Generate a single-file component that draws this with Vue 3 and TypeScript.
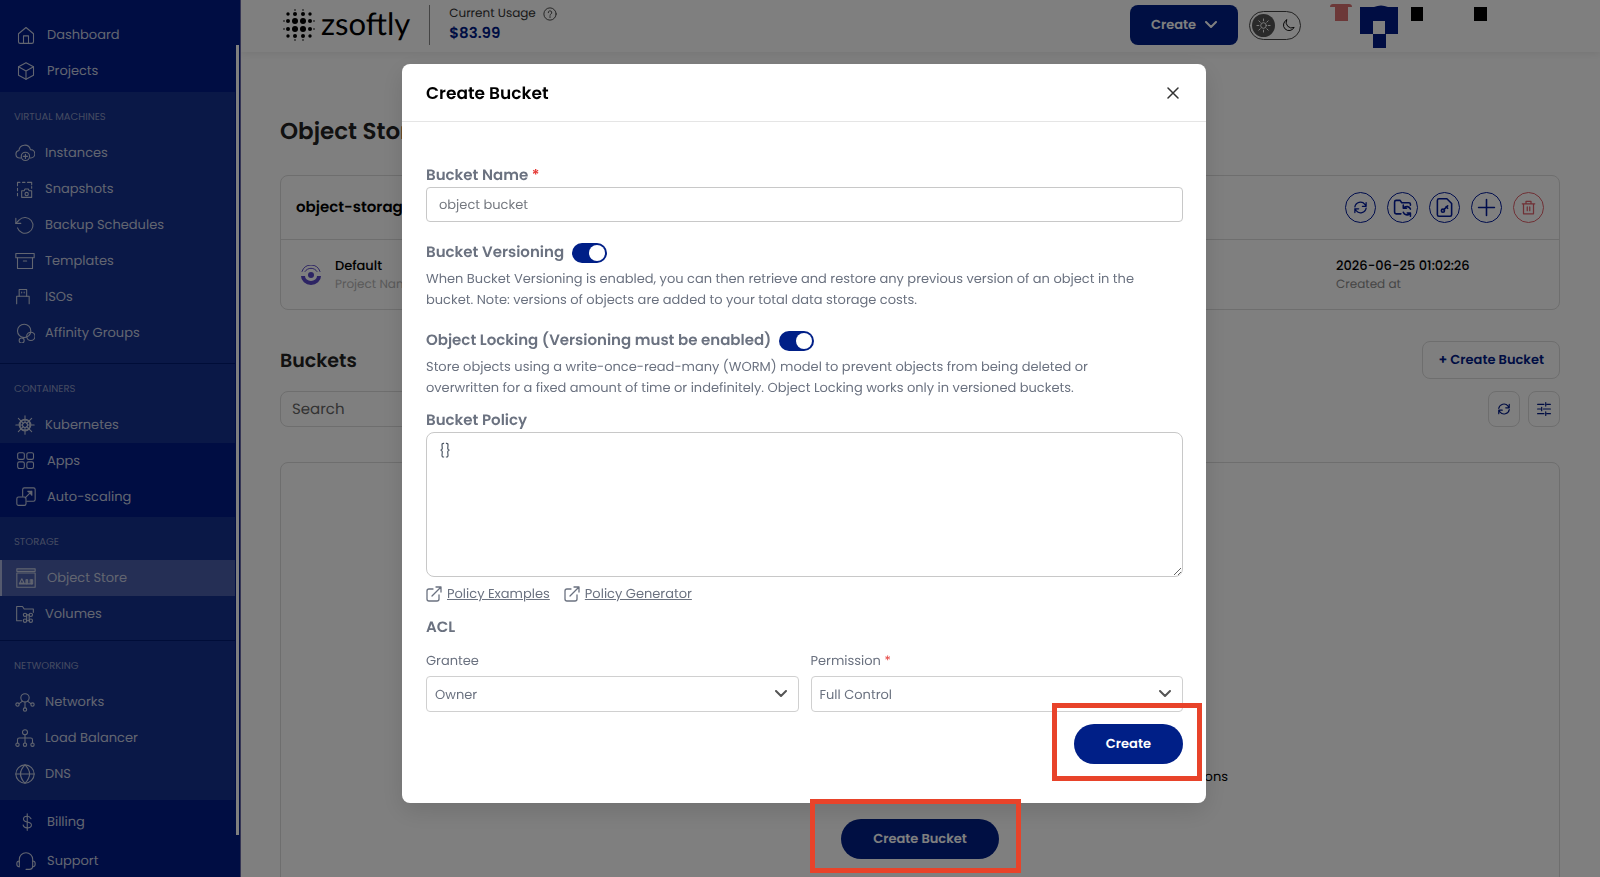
<script setup lang="ts">
import { ref } from 'vue'

interface NavItem {
  label: string
  icon: string
  active?: boolean
}
interface NavBlock {
  kind: 'plain' | 'section' | 'footer'
  title?: string
  divided?: boolean
  roomy?: boolean
  flush?: boolean
  items: NavItem[]
}

const icons: Record<string, string[]> = {
  home: ['M3 10.5 12 3l9 7.5V20a2 2 0 0 1-2 2H5a2 2 0 0 1-2-2z', 'M9 22v-9h6v9'],
  cube: ['M12 2 21 7v10l-9 5-9-5V7z', 'M3 7l9 5 9-5M12 12v10'],
  cloud: [
    'M7 18H5.500a4.500 4.500 0 0 1-.8-8.900A7 7 0 0 1 18.500 8a5 5 0 0 1 .5 10h-1',
    'M17.500 16a5 5 0 1 1-10 0 5 5 0 0 1 10 0z',
    'M12.500 13.500v5M10 16h5',
  ],
  snapshot: [
    'M3 20v-3M3 14v-3M3 8V4h3M9 4h3M15 4h5v3M20 9v2',
    'M8 14h3l1-2h4l1 2h3v8H8z',
    'M16 18a2 2 0 1 1-4 0 2 2 0 0 1 4 0z',
  ],
  restore: ['M1 4v6h6', 'M3 15.500A9.500 9.500 0 1 0 5 6L1 10'],
  archive: ['M1 3h22v5H1z', 'M3 8v13h18V8', 'M10 12h4'],
  usb: ['M5 3h9v8H5z', 'M5 11H2v9M14 11h3v9', 'M8 6v1M11 6v1'],
  bubbles: [
    'M19 9.500a8 8 0 1 1-16 0 8 8 0 0 1 16 0z',
    'M24 16a5 5 0 1 1-10 0 5 5 0 0 1 10 0z',
    'M11 21a3 3 0 1 1-6 0 3 3 0 0 1 6 0z',
  ],
  helm: [
    'M19 12a7 7 0 1 1-14 0 7 7 0 0 1 14 0z',
    'M15 12a3 3 0 1 1-6 0 3 3 0 0 1 6 0z',
    'M12 1v8M12 15v8M1 12h8M15 12h8M4 4l6 6M14 14l6 6M20 4l-6 6M10 14l-6 6',
    'M18 12a6 6 0 1 1-12 0 6 6 0 0 1 12 0z',
  ],
  apps: [
    'M4 2h4a2 2 0 0 1 2 2v4a2 2 0 0 1-2 2H4a2 2 0 0 1-2-2V4a2 2 0 0 1 2-2z',
    'M15 2h4a2 2 0 0 1 2 2v4a2 2 0 0 1-2 2h-4a2 2 0 0 1-2-2V4a2 2 0 0 1 2-2z',
    'M4 13h4a2 2 0 0 1 2 2v4a2 2 0 0 1-2 2H4a2 2 0 0 1-2-2v-4a2 2 0 0 1 2-2z',
    'M15 13h4a2 2 0 0 1 2 2v4a2 2 0 0 1-2 2h-4a2 2 0 0 1-2-2v-4a2 2 0 0 1 2-2z',
  ],
  scale: [
    'M8 11V3a2 2 0 0 1 2-2h11a2 2 0 0 1 2 2v12a2 2 0 0 1-2 2h-8',
    'M3 12h7a2 2 0 0 1 2 2v6a2 2 0 0 1-2 2H3a2 2 0 0 1-2-2v-6a2 2 0 0 1 2-2z',
    'M11 13l8-8M14 5h5v5M15 6h3v3',
  ],
  store: [
    'M1 1h22v3H1z',
    'M1 6h22v17H1z',
    'M4 19l3-6 3 6zM5 18h4M12 14h2v5h-2zM17 14h3v5h-3zM4 19h16',
    'M13 14v5M18.500 14v5',
  ],
  volumes: [
    'M8 20H2V3h7l2 3h11v4',
    'M14 13a2 2 0 1 1-4 0 2 2 0 0 1 4 0zM21 13a2 2 0 1 1-4 0 2 2 0 0 1 4 0z',
    'M14 20a2 2 0 1 1-4 0 2 2 0 0 1 4 0zM21 20a2 2 0 1 1-4 0 2 2 0 0 1 4 0z',
    'M14 13h3v7h-3z',
  ],
  network: [
    'M17 7a5 5 0 1 1-10 0 5 5 0 0 1 10 0z',
    'M5 15a2 2 0 1 1-4 0 2 2 0 0 1 4 0zM23 15a2 2 0 1 1-4 0 2 2 0 0 1 4 0zM14 21a2 2 0 1 1-4 0 2 2 0 0 1 4 0z',
    'M5 14l4-3M19 14l-4-3M12 12v7',
  ],
  tree: [
    'M15 5a3 3 0 1 1-6 0 3 3 0 0 1 6 0z',
    'M5 20a2 2 0 1 1-4 0 2 2 0 0 1 4 0zM23 20a2 2 0 1 1-4 0 2 2 0 0 1 4 0zM14 20a2 2 0 1 1-4 0 2 2 0 0 1 4 0z',
    'M12 8v10M3 18v-4a2 2 0 0 1 2-2h14a2 2 0 0 1 2 2v4',
  ],
  globe: [
    'M23 12a11 11 0 1 1-22 0 11 11 0 0 1 22 0z',
    'M12 1c-7 7-7 15 0 22M12 1c7 7 7 15 0 22M1 12h22',
  ],
  dollar: ['M18 8c-1-2-2-3-4.500-3C11 5 9 6 9 8.500s2 3 4.500 3.500 5 1 5 3.500-2.500 3.500-5 3.500-4.500-1-5-3.500', 'M13.500 2v20'],
  headset: [
    'M4 14V10a8 8 0 0 1 16 0v8a4 4 0 0 1-4 4h-4',
    'M4 12a3 3 0 0 0-3 3v1a3 3 0 0 0 3 3zM20 12a3 3 0 0 1 3 3v1a3 3 0 0 1-3 3',
  ],
}

const nav: NavBlock[] = [
  { kind: 'plain', items: [{ label: 'Dashboard', icon: 'home' }, { label: 'Projects', icon: 'cube' }] },
  {
    kind: 'section',
    title: 'Virtual Machines',
    divided: true,
    roomy: true,
    items: [
      { label: 'Instances', icon: 'cloud' },
      { label: 'Snapshots', icon: 'snapshot' },
      { label: 'Backup Schedules', icon: 'restore' },
      { label: 'Templates', icon: 'archive' },
      { label: 'ISOs', icon: 'usb' },
      { label: 'Affinity Groups', icon: 'bubbles' },
    ],
  },
  { kind: 'section', title: 'Containers', flush: true, items: [{ label: 'Kubernetes', icon: 'helm' }] },
  { kind: 'plain', items: [{ label: 'Apps', icon: 'apps' }, { label: 'Auto-scaling', icon: 'scale' }] },
  {
    kind: 'section',
    title: 'Storage',
    divided: true,
    items: [
      { label: 'Object Store', icon: 'store', active: true },
      { label: 'Volumes', icon: 'volumes' },
    ],
  },
  {
    kind: 'section',
    title: 'Networking',
    items: [
      { label: 'Networks', icon: 'network' },
      { label: 'Load Balancer', icon: 'tree' },
      { label: 'DNS', icon: 'globe' },
    ],
  },
  { kind: 'footer', items: [{ label: 'Billing', icon: 'dollar' }, { label: 'Support', icon: 'headset' }] },
]

const bucketName = ref('')
const versioning = ref(true)
const locking = ref(true)
const policy = ref('{}')
const grantee = ref('Owner')
const permission = ref('Full Control')
const search = ref('')
</script>

<template>
  <div class="app">
    <aside class="sidebar">
      <nav class="nav" aria-label="Main">
        <div
          v-for="(block, i) in nav"
          :key="i"
          :class="['block', block.kind, { divided: block.divided, roomy: block.roomy, flush: block.flush }]"
        >
          <h2 v-if="block.title" class="block-title">{{ block.title }}</h2>
          <a
            v-for="item in block.items"
            :key="item.label"
            href="#"
            :class="['nav-item', { active: item.active }]"
          >
            <svg class="nav-icon" viewBox="0 0 24 24" aria-hidden="true">
              <path v-for="(d, k) in icons[item.icon]" :key="k" :d="d" />
            </svg>
            <span>{{ item.label }}</span>
          </a>
        </div>
      </nav>
      <div class="scroll-thumb"></div>
    </aside>

    <div class="page">
      <header class="topbar">
        <div class="brand">
          <svg class="brand-mark" viewBox="0 0 34 34" aria-hidden="true">
            <g>
              <circle cx="13" cy="13" r="3" /><circle cx="21" cy="13" r="3" />
              <circle cx="13" cy="21" r="3" /><circle cx="21" cy="21" r="3" />
              <circle cx="6" cy="13" r="2" /><circle cx="28" cy="13" r="2" />
              <circle cx="6" cy="21" r="2" /><circle cx="28" cy="21" r="2" />
              <circle cx="13" cy="6" r="2" /><circle cx="21" cy="6" r="2" />
              <circle cx="13" cy="28" r="2" /><circle cx="21" cy="28" r="2" />
              <circle cx="6" cy="6" r="1.700" /><circle cx="28" cy="6" r="1.700" />
              <circle cx="6" cy="28" r="1.700" /><circle cx="28" cy="28" r="1.700" />
              <circle cx="2" cy="13" r=".8" /><circle cx="2" cy="21" r=".8" />
              <circle cx="32" cy="13" r=".8" /><circle cx="32" cy="21" r=".8" />
              <circle cx="13" cy="2" r=".8" /><circle cx="21" cy="2" r=".8" />
              <circle cx="13" cy="32" r=".8" /><circle cx="21" cy="32" r=".8" />
            </g>
          </svg>
          <span class="brand-name">zsoftly</span>
        </div>
        <div class="usage">
          <span class="usage-label">
            Current Usage
            <svg class="help" viewBox="0 0 16 16" aria-hidden="true">
              <circle cx="8" cy="8" r="7" />
              <path d="M6 6.500a2 2 0 1 1 3 1.600c-.7.400-1 .8-1 1.400M8 11v1" />
            </svg>
          </span>
          <strong class="usage-value">$83.99</strong>
        </div>
        <div class="top-actions">
          <button type="button" class="create-menu">
            Create
            <svg viewBox="0 0 12 8" aria-hidden="true"><path d="M1 1l5 5 5-5" /></svg>
          </button>
          <button type="button" class="theme" aria-label="Theme">
            <span class="theme-on">
              <svg viewBox="0 0 16 16" aria-hidden="true">
                <circle cx="8" cy="8" r="3" />
                <path d="M8 1v2M8 13v2M1 8h2M13 8h2M3 3l1.500 1.500M11.500 11.500L13 13M13 3l-1.500 1.500M4.500 11.500L3 13" />
              </svg>
            </span>
            <svg class="moon" viewBox="0 0 16 16" aria-hidden="true">
              <path d="M6 2a6 6 0 1 0 8 8A6 6 0 0 1 6 2z" />
            </svg>
          </button>
          <svg class="account" viewBox="0 0 160 48" aria-hidden="true">
            <path fill="#d87070" d="M0 3a3 3 0 0 1 3-3h16a3 3 0 0 1 3 3h-4v14H5V3z" />
            <path
              fill="#001a87"
              d="M30 3h14q7-3 14 0h10v27H56v14H43V30H30z"
            />
            <path fill="#fff" d="M43 17h12v13H43z" />
            <path fill="#000" d="M81 3h12v14H81zM144 3h13v14h-13z" />
          </svg>
        </div>
      </header>

      <main class="content">
        <h1 class="page-title">Object Storage</h1>

        <section class="card">
          <div class="card-head">
            <h2 class="card-title">object-storage</h2>
            <div class="card-actions">
              <button type="button" class="round" aria-label="Refresh">
                <svg viewBox="0 0 24 24"><path d="M3 11a9 9 0 0 1 16-4l2 3M21 4v6h-6M21 13a9 9 0 0 1-16 4l-2-3M3 20v-6h6" /></svg>
              </button>
              <button type="button" class="round" aria-label="Sync folder">
                <svg class="big" viewBox="0 0 24 24"><path d="M10 20H4a2 2 0 0 1-2-2V5a2 2 0 0 1 2-2h5l2 3h9a2 2 0 0 1 2 2v1M22 14a5 5 0 0 0-8-2M13 9v4h4M13 18a5 5 0 0 0 8 2M22 23v-4h-4" /></svg>
              </button>
              <button type="button" class="round" aria-label="Access keys">
                <svg class="big" viewBox="0 0 24 24"><path d="M5 1h10l6 6v14a2 2 0 0 1-2 2H5a2 2 0 0 1-2-2V3a2 2 0 0 1 2-2zM12 16a2 2 0 1 1-4 0 2 2 0 0 1 4 0zM11 15l5-5M14 11l2 2" /></svg>
              </button>
              <button type="button" class="round" aria-label="Add">
                <svg class="big" viewBox="0 0 24 24"><path d="M12 2v20M2 12h20" /></svg>
              </button>
              <button type="button" class="round danger" aria-label="Delete">
                <svg viewBox="0 0 24 24"><path d="M2 6h20M8 6V2h8v4M4 6v16h16V6M10 11v6M14 11v6" /></svg>
              </button>
            </div>
          </div>
          <div class="card-body">
            <svg class="project-logo" viewBox="0 0 20 20" aria-hidden="true">
              <circle cx="10" cy="10" r="3" />
              <path d="M0 11a10 9 0 0 0 20 0h-4a6 5 0 0 1-12 0z" />
              <path class="line" d="M1 6.500a9.500 9.500 0 0 1 18 0M4 6.500a7 7 0 0 1 12 0" />
            </svg>
            <div class="fact">
              <span class="fact-value">Default</span>
              <span class="fact-label">Project Name</span>
            </div>
            <div class="fact created">
              <span class="fact-value">2026-06-25 01:02:26</span>
              <span class="fact-label dark">Created at</span>
            </div>
          </div>
        </section>

        <div class="row buckets-head">
          <h2 class="section-title">Buckets</h2>
          <button type="button" class="outline">+ Create Bucket</button>
        </div>

        <div class="row">
          <input v-model="search" class="search" type="search" placeholder="Search" aria-label="Search" />
          <div class="tools">
            <button type="button" class="tool" aria-label="Refresh buckets">
              <svg viewBox="0 0 24 24"><path d="M3 11a9 9 0 0 1 16-4l2 3M21 4v6h-6M21 13a9 9 0 0 1-16 4l-2-3M3 20v-6h6" /></svg>
            </button>
            <button type="button" class="tool" aria-label="Filters">
              <svg viewBox="0 0 24 24"><path d="M1 4h11M17 4h6M15 1v6M1 12h5M11 12h12M8 9v6M1 20h11M17 20h6M15 17v6" /></svg>
            </button>
          </div>
        </div>

        <section class="empty">
          <p class="empty-text">Create a bucket to keep your files with versions, policies and permissions</p>
          <div class="marked marked-page">
            <button type="button" class="pill">Create Bucket</button>
          </div>
        </section>
      </main>
    </div>

    <div class="overlay">
      <form class="modal" role="dialog" aria-labelledby="modal-title" @submit.prevent>
        <div class="modal-head">
          <h2 id="modal-title" class="modal-title">Create Bucket</h2>
          <button type="button" class="close" aria-label="Close">
            <svg viewBox="0 0 12 12"><path d="M1 1l10 10M11 1L1 11" /></svg>
          </button>
        </div>
        <div class="modal-body">
          <label class="label" for="bucket-name">Bucket Name <span class="req">*</span></label>
          <input id="bucket-name" v-model="bucketName" class="field" type="text" placeholder="object bucket" />

          <div class="switch-row">
            <label class="label" for="versioning">Bucket Versioning</label>
            <input id="versioning" v-model="versioning" class="switch" type="checkbox" />
          </div>
          <p class="hint">
            When Bucket Versioning is enabled, you can then retrieve and restore any previous version of an object in the<br />
            bucket. Note: versions of objects are added to your total data storage costs.
          </p>

          <div class="switch-row">
            <label class="label" for="locking">Object Locking (Versioning must be enabled)</label>
            <input id="locking" v-model="locking" class="switch" type="checkbox" />
          </div>
          <p class="hint">
            Store objects using a write-once-read-many (WORM) model to prevent objects from being deleted or<br />
            overwritten for a fixed amount of time or indefinitely. Object Locking works only in versioned buckets.
          </p>

          <label class="label policy-label" for="policy">Bucket Policy</label>
          <textarea id="policy" v-model="policy" class="field area"></textarea>

          <div class="links">
            <a v-for="name in ['Policy Examples', 'Policy Generator']" :key="name" href="#" class="link">
              <svg viewBox="0 0 16 16" aria-hidden="true">
                <path d="M7 3H3a2 2 0 0 0-2 2v8a2 2 0 0 0 2 2h8a2 2 0 0 0 2-2V9M10 1h5v5M15 1L6 10" />
              </svg>
              <span>{{ name }}</span>
            </a>
          </div>

          <h3 class="label acl">ACL</h3>
          <div class="grid">
            <div class="cell">
              <label class="small-label" for="grantee">Grantee</label>
              <div class="select-wrap">
                <select id="grantee" v-model="grantee" class="select">
                  <option>Owner</option>
                </select>
                <svg class="chevron" viewBox="0 0 12 8" aria-hidden="true"><path d="M1 1l5 5 5-5" /></svg>
              </div>
            </div>
            <div class="cell">
              <label class="small-label" for="permission">Permission <span class="req">*</span></label>
              <div class="select-wrap">
                <select id="permission" v-model="permission" class="select">
                  <option>Full Control</option>
                </select>
                <svg class="chevron" viewBox="0 0 12 8" aria-hidden="true"><path d="M1 1l5 5 5-5" /></svg>
              </div>
            </div>
          </div>

          <div class="modal-actions">
            <div class="marked marked-modal">
              <button type="submit" class="pill">Create</button>
            </div>
          </div>
        </div>
      </form>
    </div>
  </div>
</template>

<style>
html,
body {
  margin: 0;
  height: 100%;
  background: #fff;
}
</style>

<style scoped>
.app {
  --navy: #001f87;
  --grey: #6b7280;
  display: flex;
  height: 100vh;
  overflow: hidden;
  background: #fff;
  font-family: Poppins, Inter, "Open Sans", sans-serif;
  font-size: 13px;
  text-rendering: geometricPrecision;
  color: #000;
}
.app *,
.app *::before {
  box-sizing: border-box;
}
h1,
h2,
h3,
p {
  margin: 0;
}
button,
input,
select,
textarea {
  font: inherit;
  color: inherit;
  text-rendering: inherit;
}
button {
  padding: 0;
  cursor: pointer;
}
svg {
  flex: none;
  fill: none;
  stroke: currentColor;
  stroke-linecap: round;
  stroke-linejoin: round;
}

/* Sidebar */
.sidebar {
  position: relative;
  flex: none;
  width: 241px;
  height: 100vh;
  overflow: hidden;
  background: #001a87;
  border-right: 1px solid #6a6aa8;
}
.nav {
  padding: 17px 5px 0 0;
}
.block-title {
  margin-bottom: 10px;
  padding-left: 14px;
  font-size: 10px;
  line-height: 16px;
  font-weight: 400;
  text-transform: uppercase;
  color: #8a96c2;
}
.plain {
  padding-bottom: 2px;
}
.plain:first-child {
  padding-bottom: 3px;
}
.section {
  padding: 17px 0 8px;
  background: #14308e;
}
.section.roomy {
  padding-bottom: 12px;
}
.section.flush {
  padding-bottom: 0;
}
.section.divided {
  border-bottom: 1px solid #001a70;
}
.footer {
  padding-top: 2px;
}
.nav-item {
  display: flex;
  align-items: center;
  gap: 10px;
  height: 36px;
  padding-left: 15px;
  color: #c4cbe0;
  text-decoration: none;
}
.footer .nav-item {
  height: 39px;
}
.plain .nav-item,
.footer .nav-item,
.nav-item.active {
  padding-left: 16px;
  gap: 11px;
}
.nav-item.active {
  padding-left: 14px;
  border-left: 2px solid #aab4dc;
  background: #4a5eaa;
}
.nav-icon {
  width: 20px;
  height: 20px;
  stroke-width: 1.3;
}
.scroll-thumb {
  position: absolute;
  top: 45px;
  bottom: 42px;
  right: 1px;
  width: 3px;
  background: #fff;
}

/* Top bar */
.page {
  flex: 1;
  min-width: 0;
}
.topbar {
  display: flex;
  align-items: center;
  height: 52px;
  padding: 0 110px 2px 41px;
  background: #fff;
  box-shadow: 0 2px 8px rgba(0, 0, 0, 0.08);
}
.brand {
  display: flex;
  align-items: center;
  gap: 5px;
  padding-right: 19px;
  border-right: 1px solid #888;
  height: 40px;
}
.brand-mark {
  width: 34px;
  height: 34px;
}
.brand-mark g {
  fill: #000;
  stroke: none;
}
.brand-name {
  font-family: Lato, sans-serif;
  font-size: 31px;
  line-height: 36px;
  margin-top: -4px;
}
.usage {
  display: flex;
  flex-direction: column;
  padding-left: 19px;
}
.usage-label {
  display: flex;
  align-items: center;
  gap: 7px;
  font-size: 12px;
  line-height: 18px;
  color: #333;
}
.help {
  width: 14px;
  height: 14px;
}
.usage-value {
  font-size: 15px;
  line-height: 22px;
  font-weight: 600;
  color: #001a87;
}
.top-actions {
  display: flex;
  align-items: center;
  gap: 11px;
  margin-left: auto;
}
.create-menu {
  display: flex;
  align-items: center;
  justify-content: center;
  gap: 9px;
  width: 108px;
  height: 40px;
  border: 0;
  border-radius: 8px;
  background: var(--navy);
  color: #fff;
  font-weight: 600;
}
.create-menu svg {
  width: 12px;
  height: 8px;
  stroke-width: 2;
}
.theme {
  display: flex;
  align-items: center;
  gap: 6px;
  width: 52px;
  height: 29px;
  padding: 0 2px;
  border: 1px solid #444;
  border-radius: 15px;
  background: none;
}
.theme-on {
  display: flex;
  align-items: center;
  justify-content: center;
  width: 23px;
  height: 23px;
  border-radius: 50%;
  background: #555;
  color: #fff;
}
.theme svg {
  width: 15px;
  height: 15px;
}
.account {
  width: 160px;
  height: 48px;
  margin: 6px 0 0 18px;
  stroke: none;
}

/* Content */
.content {
  padding: 60px 40px 0 39px;
}
.page-title {
  font-size: 23px;
  line-height: 40px;
  font-weight: 600;
  color: #222;
}
.card {
  margin-top: 23px;
  border: 1px solid #dcdcdc;
  border-radius: 8px;
}
.card-head {
  display: flex;
  align-items: center;
  justify-content: space-between;
  height: 64px;
  padding: 0 15px;
  border-bottom: 1px solid #dcdcdc;
}
.card-title {
  font-size: 15px;
  font-weight: 600;
}
.card-actions {
  display: flex;
  gap: 11px;
}
.round {
  display: flex;
  align-items: center;
  justify-content: center;
  width: 31px;
  height: 31px;
  border: 1px solid currentColor;
  border-radius: 50%;
  background: none;
  color: #001a9a;
}
.round svg {
  width: 15px;
  height: 15px;
  stroke-width: 2;
}
.round svg.big {
  width: 19px;
  height: 19px;
}
.round.danger {
  color: #e0606a;
}
.card-body {
  display: flex;
  align-items: center;
  height: 69px;
  padding: 0 15px 0 20px;
}
.project-logo {
  width: 20px;
  height: 20px;
  margin-right: 14px;
  fill: #5a48c8;
  stroke: none;
}
.project-logo .line {
  fill: none;
  stroke: #5a48c8;
}
.fact {
  display: flex;
  flex-direction: column;
}
.fact.created {
  width: 208px;
  margin-left: auto;
}
.fact-value {
  line-height: 20px;
  font-weight: 500;
}
.fact-label {
  font-size: 12px;
  line-height: 18px;
  color: #b4b4b4;
}
.fact-label.dark {
  color: #8c8c8c;
}
.row {
  display: flex;
  align-items: center;
  justify-content: space-between;
}
.buckets-head {
  margin: 31px 0 12px;
}
.section-title {
  font-size: 19px;
  font-weight: 600;
  color: #222;
}
.outline {
  height: 38px;
  padding: 0 15px;
  border: 1px solid #dcdcdc;
  border-radius: 8px;
  background: none;
  color: #001a87;
  font-weight: 600;
}
.search {
  width: 300px;
  height: 36px;
  padding: 0 11px;
  border: 1px solid #dcdcdc;
  border-radius: 8px;
  background: none;
  font-size: 15px;
}
.search::placeholder {
  color: #666;
}
.tools {
  display: flex;
  gap: 8px;
}
.tool {
  display: flex;
  align-items: center;
  justify-content: center;
  width: 32px;
  height: 36px;
  border: 1px solid #dcdcdc;
  border-radius: 8px;
  background: none;
  color: #001a87;
}
.tool svg {
  width: 14px;
  height: 14px;
  stroke-width: 2;
}
.empty {
  display: flex;
  flex-direction: column;
  align-items: center;
  margin-top: 35px;
  padding: 303px 0 60px;
  border: 1px solid #dcdcdc;
  border-radius: 8px;
}
.empty-text {
  width: 616px;
  margin-bottom: 31px;
  line-height: 22px;
  text-align: right;
}
.pill {
  height: 40px;
  padding: 0 32px;
  border: 0;
  border-radius: 20px;
  background: var(--navy);
  color: #fff;
  font-weight: 600;
}

/* Highlight frames around the two call-to-action buttons */
.marked {
  position: relative;
}
.marked::after {
  content: "";
  position: absolute;
  z-index: 30;
  border: 5px solid #e8432a;
  pointer-events: none;
}
.marked-page::after {
  inset: -20px -22px -14px -31px;
}
.marked-modal::after {
  inset: -21px -19px -17px -22px;
}

/* Modal */
.overlay {
  position: fixed;
  inset: 0;
  z-index: 10;
  display: flex;
  align-items: flex-start;
  justify-content: center;
  padding: 64px 0 0 8px;
  background: rgba(0, 0, 0, 0.5);
}
.modal {
  width: 804px;
  border-radius: 8px;
  background: #fff;
  box-shadow: 0 8px 24px rgba(0, 0, 0, 0.12);
}
.modal-head {
  display: flex;
  align-items: center;
  justify-content: space-between;
  height: 58px;
  padding: 0 23px 0 24px;
  border-bottom: 1px solid #e5e5e5;
}
.modal-title {
  font-size: 17px;
  font-weight: 600;
}
.close {
  display: flex;
  align-items: center;
  justify-content: center;
  width: 20px;
  height: 20px;
  border: 0;
  background: none;
  color: #333;
}
.close svg {
  width: 12px;
  height: 12px;
  stroke-width: 1.5;
}
.modal-body {
  display: flex;
  flex-direction: column;
  padding: 43px 23px 39px 24px;
}
.label {
  font-size: 15px;
  line-height: 22px;
  font-weight: 600;
  color: var(--grey);
}
.req {
  color: #e53935;
}
.field {
  width: 100%;
  height: 35px;
  padding: 0 12px;
  border: 1px solid #c8c8c8;
  border-radius: 4px;
  background: #fff;
  color: #4b5563;
}
.field::placeholder {
  color: #757980;
}
.switch-row {
  display: flex;
  align-items: center;
  gap: 8px;
  margin: 20px 0 4px;
}
.switch {
  appearance: none;
  width: 35px;
  height: 20px;
  margin: 0;
  padding: 2px;
  border-radius: 10px;
  background: #b0b4c0;
}
.switch::before {
  content: "";
  display: block;
  width: 16px;
  height: 16px;
  border-radius: 50%;
  background: #fff;
}
.switch:checked {
  background: var(--navy);
  padding-left: 17px;
}
.hint {
  line-height: 21px;
  color: var(--grey);
}
.policy-label {
  margin-top: 12px;
}
.field.area {
  display: block;
  height: 145px;
  padding: 8px 12px;
  border-radius: 8px;
  line-height: 20px;
  resize: vertical;
}
.links {
  display: flex;
  gap: 14px;
  margin-top: 6px;
}
.link {
  display: flex;
  align-items: center;
  gap: 5px;
  line-height: 22px;
  color: var(--grey);
  text-decoration: none;
}
.link span {
  text-decoration: underline;
}
.link svg {
  width: 16px;
  height: 16px;
  stroke-width: 1.3;
}
.acl {
  margin-top: 12px;
}
.grid {
  display: grid;
  grid-template-columns: 1fr 1fr;
  gap: 12px;
  margin-top: 12px;
}
.cell {
  display: flex;
  flex-direction: column;
}
.small-label {
  line-height: 20px;
  margin-bottom: 5px;
  color: var(--grey);
}
.select-wrap {
  position: relative;
}
.select {
  appearance: none;
  display: block;
  width: 100%;
  height: 36px;
  padding: 0 36px 0 8px;
  border: 1px solid #d0d0d0;
  border-radius: 4px;
  background: #fff;
  color: var(--grey);
}
.chevron {
  position: absolute;
  top: 14px;
  right: 12px;
  width: 12px;
  height: 8px;
  color: #555;
  stroke-width: 2;
  pointer-events: none;
}
.modal-actions {
  display: flex;
  justify-content: flex-end;
  margin-top: 12px;
}
</style>
